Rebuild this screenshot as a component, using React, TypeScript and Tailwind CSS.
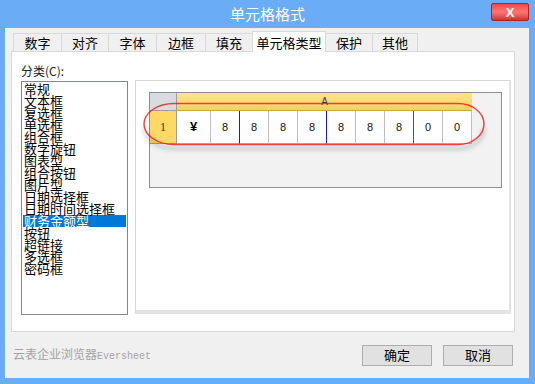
import React from "react";

const tabs = [
  { label: "数字", cls: "w-[48px] h-[18px] border-t border-l bg-[#f0f0f0]" },
  { label: "对齐", cls: "w-[47px] h-[18px] border-t border-l bg-[#f0f0f0]" },
  { label: "字体", cls: "w-[48px] h-[18px] border-t border-l bg-[#f0f0f0]" },
  { label: "边框", cls: "w-[49px] h-[18px] border-t border-l bg-[#f0f0f0]" },
  { label: "填充", cls: "w-[47px] h-[18px] border-t border-l bg-[#f0f0f0]" },
  { label: "单元格类型", cls: "w-[74px] h-[21px] -mb-px border-t border-l border-r bg-white relative z-10" },
  { label: "保护", cls: "w-[46px] h-[18px] border-t bg-[#f0f0f0]" },
  { label: "其他", cls: "w-[46px] h-[18px] border-t border-l border-r bg-[#f0f0f0]" },
];

const items = [
  "常规", "文本框", "复选框", "单选框", "组合框", "数字旋钮", "图表型", "组合按钮",
  "图片型", "日期选择框", "日期时间选择框", "财务金额型", "按钮", "超链接", "多选框", "密码框",
];

// right-hand divider colour of each digit cell
const cells = [
  { t: "8", line: "border-[#1414ff]" },
  { t: "8", line: "border-[#bdbdbd]" },
  { t: "8", line: "border-[#bdbdbd]" },
  { t: "8", line: "border-[#1414ff]" },
  { t: "8", line: "border-[#bdbdbd]" },
  { t: "8", line: "border-[#bdbdbd]" },
  { t: "8", line: "border-[#ff1010]" },
  { t: "0", line: "border-[#bdbdbd]" },
  { t: "0", line: "border-[#bdbdbd]" },
];

export default function App() {
  return (
    <div className="w-[535px] h-[384px] bg-[#6aacf6] flex flex-col font-['Noto_Sans_CJK_SC',sans-serif]">
      {/* title bar */}
      <div className="h-[28px] grid grid-cols-[1fr_auto_1fr]">
        <div />
        <div className="text-white text-[15px] leading-[28px]">单元格格式</div>
        <div className="flex justify-end items-start pt-[3px] pr-[6px]">
          <div className="w-[38px] h-[18px] rounded-[2px] border border-[#b3231c] bg-linear-to-b from-[#f24646] via-[#ff7474] to-[#e02a2a] flex items-center justify-center text-white text-[13px] font-bold font-['Liberation_Sans',sans-serif] leading-none">
            X
          </div>
        </div>
      </div>

      {/* body */}
      <div className="ml-[5px] w-[524px] h-[350px] bg-[#f0f0f0] pt-[3px] flex flex-col">
        <div className="flex items-end pl-[8px] h-[20px]">
          {tabs.map((tab) => (
            <div
              key={tab.label}
              className={`${tab.cls} border-[#d9d9d9] flex items-center justify-center text-[13px] text-black leading-none`}
            >
              {tab.label}
            </div>
          ))}
        </div>

        <div className="ml-[6px] w-[504px] h-[281px] border border-[#d9d9d9] bg-white flex items-start pl-[9px] pt-[12px] gap-[7px]">
          {/* left column */}
          <div className="flex flex-col w-[107px]">
            <div className="h-[17px] text-[12px] leading-[14px] text-[#222]">分类(C):</div>
            <div className="h-[234px] border border-[#828790] bg-white pt-px">
              {items.map((it) =>
                it === "财务金额型" ? (
                  <div key={it} className="h-[12px] mx-px bg-[#0078d7] text-white text-[13px] leading-[12px] pl-px whitespace-nowrap">
                    {it}
                  </div>
                ) : (
                  <div key={it} className="h-[12px] text-[13px] leading-[12px] pl-[2px] text-black whitespace-nowrap">
                    {it}
                  </div>
                )
              )}
            </div>
          </div>

          {/* right pane */}
          <div className="relative mt-[16px] w-[376px] h-[234px] border-l border-t border-[#d6d6d6] border-r-2 border-r-[#e2e2e2] border-b-4 border-b-[#e4e4e4] bg-white pl-[13px] pt-[11px]">
            <div className="w-[353px] h-[96px] border border-[#8d8d8d] bg-[#f2f2f2] flex flex-col">
              <div className="flex h-[18px]">
                <div className="w-[27px] bg-[#d8dce1] border-r border-b border-[#9e9e9e]" />
                <div className="w-[295px] bg-linear-to-b from-[#ffe48d] to-[#f6d35e] border-b border-[#c9a646] text-center text-[10px] leading-[17px] text-[#1f3a5f] font-['Liberation_Sans',sans-serif]">
                  A
                </div>
              </div>
              <div className="flex h-[33px]">
                <div className="w-[27px] bg-[#ffd865] border-r border-b border-[#9e9e9e] flex items-center justify-center text-[12px] text-[#333] font-['Liberation_Serif',serif]">
                  1
                </div>
                <div className="w-[34px] bg-white border-r border-b border-[#bdbdbd] flex items-center justify-center text-[13px] font-bold text-black font-['Liberation_Sans',sans-serif]">
                  ¥
                </div>
                {cells.map((c, i) => (
                  <div
                    key={i}
                    className={`w-[29px] bg-white border-r ${c.line} border-b border-b-[#bdbdbd] flex items-center justify-center text-[11px] text-[#111] font-['Liberation_Sans',sans-serif]`}
                  >
                    {c.t}
                  </div>
                ))}
              </div>
            </div>

            {/* annotation ellipse */}
            <svg className="absolute left-0 top-0 pointer-events-none" width="374" height="110" viewBox="0 0 374 110">
              <defs>
                <filter id="blur" x="-10%" y="-50%" width="120%" height="200%">
                  <feGaussianBlur stdDeviation="2" />
                </filter>
              </defs>
              <path
                d="M 9 44 A 30 20.5 0 0 0 38 64.5 L 322 64.5 A 26 20.5 0 0 0 348 44"
                fill="none"
                stroke="rgba(0,0,0,0.16)"
                strokeWidth="4"
                transform="translate(0 3)"
                filter="url(#blur)"
              />
              <path
                d="M 38 22.5 L 322 22.5 A 26 20.5 0 0 1 322 63.5 L 38 63.5 A 30 20.5 0 0 1 38 22.5 Z"
                fill="none"
                stroke="rgba(240,20,20,0.8)"
                strokeWidth="1.5"
              />
            </svg>
          </div>
        </div>

        {/* footer */}
        <div className="h-[46px] flex items-center justify-between pl-[8px] pr-[16px]">
          <div className="text-[12px] text-[#a3a3a3] leading-none">
            云表企业浏览器<span className="font-['Liberation_Mono',monospace] text-[10px]">Eversheet</span>
          </div>
          <div className="flex gap-[11px]">
            <div className="w-[70px] h-[21px] bg-[#e1e1e1] border border-[#adadad] flex items-center justify-center text-[13px] text-black">
              确定
            </div>
            <div className="w-[70px] h-[21px] bg-[#e1e1e1] border border-[#adadad] flex items-center justify-center text-[13px] text-black">
              取消
            </div>
          </div>
        </div>
      </div>
    </div>
  );
}
